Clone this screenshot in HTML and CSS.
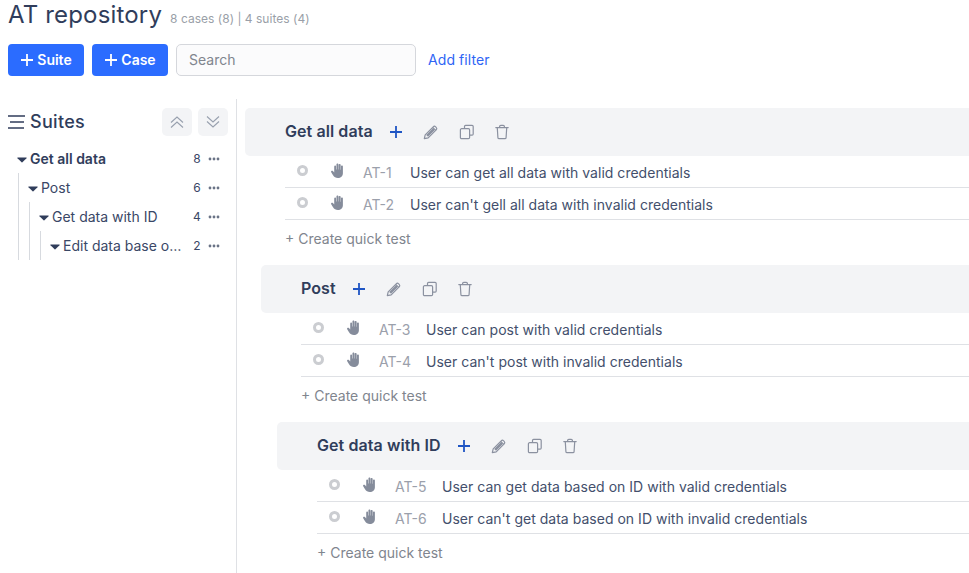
FILE: index.html
```html
<!DOCTYPE html>
<html lang="en">
<head>
<meta charset="utf-8">
<title>AT repository</title>
<link rel="stylesheet" href="styles.css">
</head>
<body>
<svg class="defs" width="0" height="0" aria-hidden="true">
  <symbol id="plus" viewBox="0 0 14 14"><path d="M7 1v12M1 7h12" fill="none" stroke="currentColor" stroke-width="1.800"/></symbol>
  <symbol id="pencil" viewBox="0 0 16 16"><path d="M1.300 14.700l.9-3.900 8-8a1.700 1.700 0 0 1 2.400 0l.6.600a1.700 1.700 0 0 1 0 2.400l-8 8zM9.700 3.300l3 3" fill="none" stroke="currentColor" stroke-width="1.200" stroke-linejoin="round"/><path d="M3.200 11l6.900-6.900 1.800 1.800L5 12.800z" fill="currentColor"/></symbol>
  <symbol id="copy" viewBox="0 0 16 16"><path d="M5.500 4.500V2.400c0-.6.500-1.100 1.100-1.100h6.500c.6 0 1.100.5 1.100 1.100v7.700c0 .6-.5 1.100-1.100 1.100h-2.600" fill="none" stroke="currentColor" stroke-width="1.200"/><rect x="1.400" y="4.700" width="9.200" height="10" rx="1.200" fill="none" stroke="currentColor" stroke-width="1.200"/></symbol>
  <symbol id="trash" viewBox="0 0 16 16"><path d="M1.800 3.600h12.400M5.600 3.400V2.600c0-.7.500-1.200 1.200-1.200h2.400c.7 0 1.200.5 1.200 1.200v.8M3.300 4l.6 9.400c0 .8.600 1.300 1.300 1.300h5.600c.7 0 1.300-.5 1.300-1.300l.6-9.400" fill="none" stroke="currentColor" stroke-width="1.200" stroke-linecap="round"/></symbol>
  <symbol id="hand" viewBox="0 0 14 14"><path d="M3 3.300c0-1.200 1.700-1.200 1.700 0v2.700h.4V1.300c0-1.200 1.800-1.200 1.800 0V6h.3V1.800c0-1.200 1.800-1.200 1.800 0V6.200h.3V3.200c0-1.200 1.800-1.200 1.800 0v6.300c0 2.700-2 4.400-4.600 4.400-2.200 0-3.500-.8-4.600-2.500L.2 8.600c-.6-1.100.8-2 1.600-1.100L3 8.900z" fill="currentColor"/></symbol>
  <symbol id="caret" viewBox="0 0 10 6"><path d="M.8.600h8.400c.4 0 .6.400.3.700L5.400 5.200a.6.600 0 0 1-.8 0L.5 1.300C.2 1 .4.600.8.600z" fill="currentColor"/></symbol>
  <symbol id="dots" viewBox="0 0 12 4"><circle cx="2" cy="2" r="1.400" fill="currentColor"/><circle cx="6" cy="2" r="1.400" fill="currentColor"/><circle cx="10" cy="2" r="1.400" fill="currentColor"/></symbol>
</svg>

<header class="top">
  <div class="title-row">
    <h1 class="title">AT repository</h1>
    <span class="counts">8 cases (8) | 4 suites (4)</span>
  </div>
  <div class="toolbar">
    <button class="btn"><svg class="btn-plus"><use href="#plus"/></svg>Suite</button>
    <button class="btn"><svg class="btn-plus"><use href="#plus"/></svg>Case</button>
    <input class="search" type="text" placeholder="Search">
    <a class="add-filter">Add filter</a>
  </div>
</header>

<div class="content">
  <aside class="sidebar">
    <div class="side-head">
      <svg class="menu-icon" viewBox="0 0 17 14"><path d="M0 1h17M2 7h14M0 13h16" fill="none" stroke="currentColor" stroke-width="1.300"/></svg>
      <h2 class="side-title">Suites</h2>
      <button class="square"><svg viewBox="0 0 14 14"><path d="M1 7.500l6-5.500 6 5.500M1 12.500l6-5.500 6 5.500" fill="none" stroke="currentColor" stroke-width="1.100"/></svg></button>
      <button class="square"><svg viewBox="0 0 14 14"><path d="M1 1.500l6 5.500 6-5.500M1 6.500l6 5.500 6-5.500" fill="none" stroke="currentColor" stroke-width="1.100"/></svg></button>
    </div>
    <div class="tree">
      <div class="node bold">
        <svg class="caret"><use href="#caret"/></svg><span class="node-name">Get all data</span><span class="node-count">8</span><svg class="dots"><use href="#dots"/></svg>
      </div>
      <div class="branch">
        <div class="node">
          <svg class="caret"><use href="#caret"/></svg><span class="node-name">Post</span><span class="node-count">6</span><svg class="dots"><use href="#dots"/></svg>
        </div>
        <div class="branch">
          <div class="node">
            <svg class="caret"><use href="#caret"/></svg><span class="node-name">Get data with ID</span><span class="node-count">4</span><svg class="dots"><use href="#dots"/></svg>
          </div>
          <div class="branch">
            <div class="node">
              <svg class="caret"><use href="#caret"/></svg><span class="node-name">Edit data base o…</span><span class="node-count">2</span><svg class="dots"><use href="#dots"/></svg>
            </div>
          </div>
        </div>
      </div>
    </div>
  </aside>

  <main class="main">
    <section class="suite">
      <div class="suite-head">
        <h3 class="suite-name">Get all data</h3>
        <svg class="act add"><use href="#plus"/></svg>
        <svg class="act"><use href="#pencil"/></svg>
        <svg class="act"><use href="#copy"/></svg>
        <svg class="act trash"><use href="#trash"/></svg>
      </div>
      <div class="suite-body">
        <div class="case"><span class="status"></span><svg class="hand"><use href="#hand"/></svg><span class="case-id">AT-1</span><span class="case-title">User can get all data with valid credentials</span></div>
        <div class="case"><span class="status"></span><svg class="hand"><use href="#hand"/></svg><span class="case-id">AT-2</span><span class="case-title">User can't gell all data with invalid credentials</span></div>
        <div class="quick">+ Create quick test</div>
      </div>
    </section>
    <section class="suite nested">
      <div class="suite-head">
        <h3 class="suite-name">Post</h3>
        <svg class="act add"><use href="#plus"/></svg>
        <svg class="act"><use href="#pencil"/></svg>
        <svg class="act"><use href="#copy"/></svg>
        <svg class="act trash"><use href="#trash"/></svg>
      </div>
      <div class="suite-body">
        <div class="case"><span class="status"></span><svg class="hand"><use href="#hand"/></svg><span class="case-id">AT-3</span><span class="case-title">User can post with valid credentials</span></div>
        <div class="case"><span class="status"></span><svg class="hand"><use href="#hand"/></svg><span class="case-id">AT-4</span><span class="case-title">User can't post with invalid credentials</span></div>
        <div class="quick">+ Create quick test</div>
      </div>
      <section class="suite nested">
        <div class="suite-head">
          <h3 class="suite-name">Get data with ID</h3>
          <svg class="act add"><use href="#plus"/></svg>
          <svg class="act"><use href="#pencil"/></svg>
          <svg class="act"><use href="#copy"/></svg>
          <svg class="act trash"><use href="#trash"/></svg>
        </div>
        <div class="suite-body">
          <div class="case"><span class="status"></span><svg class="hand"><use href="#hand"/></svg><span class="case-id">AT-5</span><span class="case-title">User can get data based on ID with valid credentials</span></div>
          <div class="case"><span class="status"></span><svg class="hand"><use href="#hand"/></svg><span class="case-id">AT-6</span><span class="case-title">User can't get data based on ID with invalid credentials</span></div>
          <div class="quick">+ Create quick test</div>
        </div>
      </section>
    </section>
  </main>
</div>
</body>
</html>
```
FILE: styles.css
```css
* { box-sizing: border-box; }
html, body { height: 100%; }
body {
  margin: 0;
  overflow: hidden;
  background: #fff;
  color: #303d5b;
  font-family: Inter, "Liberation Sans", sans-serif;
  font-size: 14px;
}
.defs { position: absolute; }

.top { padding: 0 8px; height: 99px; }
.title-row { display: flex; align-items: baseline; height: 44px; }
.title { margin: 0; font-size: 24px; font-weight: 400; line-height: 30px; letter-spacing: .17px; color: #303d5b; }
.counts { margin-left: 8px; font-size: 12px; line-height: 34px; letter-spacing: .02px; color: #9a9fa8; }

.toolbar { display: flex; align-items: center; gap: 8px; }
.btn {
  display: flex; align-items: center; justify-content: center; gap: 3px;
  width: 76px; height: 32px; padding: 0 0 2px; border: 0; border-radius: 4px;
  background: #2b6cff; color: #fff;
  font: 600 14px Inter, sans-serif;
}
.btn-plus { width: 14px; height: 14px; margin-top: 1px; }
.search {
  width: 240px; height: 32px; padding: 0 12px 2px;
  background: #fbfbfc; border: 1px solid #d5d7dc; border-radius: 5px;
  font: 400 14px Inter, sans-serif; color: #303d5b;
}
.search::placeholder { color: #80858e; opacity: 1; }
.add-filter { margin-left: 4px; padding-bottom: 2px; color: #2f65f5; font-size: 14px; letter-spacing: .08px; }

.content { display: flex; height: 474px; }
.sidebar { width: 237px; flex: none; border-right: 1px solid #dfe1e5; padding: 9px 8px 0 0; }
.side-head { display: flex; align-items: center; height: 28px; padding-left: 8px; gap: 6px; }
.menu-icon { width: 17px; height: 14px; flex: none; color: #303d5b; margin-right: -1px; }
.side-title { margin: 0 auto 0 0; padding-bottom: 2px; font-size: 18px; font-weight: 500; letter-spacing: .3px; color: #303d5b; }
.square {
  width: 30px; height: 28px; padding: 0; border: 0; border-radius: 5px;
  background: #f3f4f6; color: #98a0ae;
  display: flex; align-items: center; justify-content: center;
}
.square svg { width: 14px; height: 14px; }

.tree { margin-top: 8px; padding-left: 17px; }
.node { display: flex; align-items: center; height: 29px; font-size: 14px; color: #3a4766; }
.node.bold { font-weight: 600; color: #303d5b; }
.caret { width: 10px; height: 6px; flex: none; margin-right: 3px; color: #303d5b; position: relative; top: 1px; }
.node-name { flex: 1; min-width: 0; white-space: nowrap; overflow: hidden; }
.node-count { width: 14px; flex: none; margin-left: 4px; font-size: 12px; font-weight: 400; text-align: center; color: #3a4766; }
.dots { width: 12px; height: 4px; margin-left: 4px; margin-right: 8px; flex: none; color: #6a7386; }
.branch { margin-left: 1px; padding-left: 9px; border-left: 1px solid #d7dadf; }

.main { flex: 1; min-width: 0; padding: 9px 0 0 8px; }
.suite-head {
  display: flex; align-items: center; height: 48px; padding-left: 40px;
  background: #f3f4f6; border-radius: 5px 0 0 5px;
}
.suite-name { margin: 0 12px 0 0; padding-bottom: 2px; font-size: 16px; font-weight: 600; letter-spacing: .08px; color: #303d5b; }
.act { width: 16px; height: 16px; margin-left: 20px; color: #8b91a0; flex: none; }
.act.add { width: 14px; height: 14px; margin-left: 4px; margin-right: 0; color: #1f55c4; }
.act.trash { margin-left: 19px; }
.suite-body { padding-left: 40px; }
.case {
  display: flex; align-items: center; height: 32px; padding-top: 2px; border-bottom: 1px solid #dfe1e5;
  font-size: 14px;
}
.status { width: 11px; height: 11px; margin-left: 12px; margin-right: 1px; border: 3px solid #cbcdd1; border-radius: 50%; flex: none; position: relative; top: -2px; }
.hand { width: 15px; height: 15px; margin-left: 22px; color: #858c9b; flex: none; position: relative; top: -2px; }
.case-id { width: 47px; margin-left: 17px; color: #9ba0ab; flex: none; }
.case-title { color: #434f6c; letter-spacing: .02px; white-space: nowrap; }
.quick { height: 45px; display: flex; align-items: center; padding-bottom: 8px; color: #80858e; font-size: 14px; }
.suite.nested { margin-left: 16px; }
```
